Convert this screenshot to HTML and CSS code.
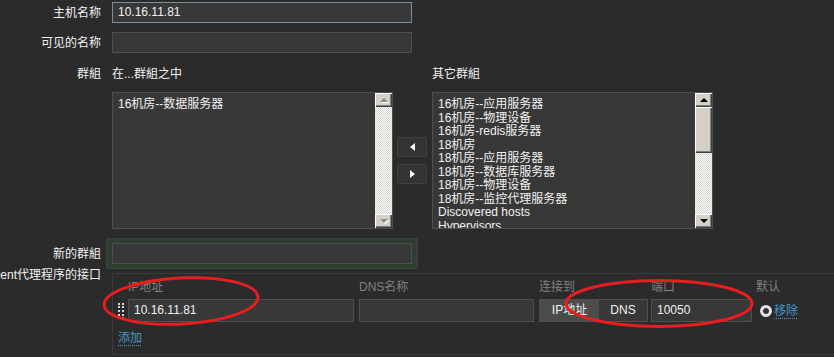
FILE: index.html
```html
<!DOCTYPE html>
<html lang="zh">
<head>
    <meta charset="UTF-8">
    <meta name="viewport" content="width=device-width, initial-scale=1.0">
    <title>主机</title>
    <link rel="stylesheet" href="styles.css">
</head>
<body>
    <div class="page">
        <div class="row row-host">
            <div class="label">主机名称</div>
            <div class="text-box focus">10.16.11.81</div>
        </div>
        <div class="row row-visible">
            <div class="label">可见的名称</div>
            <div class="text-box"></div>
        </div>
        <div class="row row-groups">
            <div class="label">群組</div>
            <div class="groups">
                <div class="group-col">
                    <div class="group-title">在...群組之中</div>
                    <div class="listbox">
                        <ul class="items">
                            <li>16机房--数据服务器</li>
                        </ul>
                        <div class="scrollbar disabled">
                            <div class="sb-btn up"><span class="tri"></span></div>
                            <div class="sb-track"></div>
                            <div class="sb-btn down"><span class="tri"></span></div>
                        </div>
                    </div>
                </div>
                <div class="move-buttons">
                    <div class="move-btn"><span class="arrow arrow-left"></span></div>
                    <div class="move-btn"><span class="arrow arrow-right"></span></div>
                </div>
                <div class="group-col">
                    <div class="group-title">其它群組</div>
                    <div class="listbox">
                        <ul class="items">
                            <li>16机房--应用服务器</li>
                            <li>16机房--物理设备</li>
                            <li>16机房-redis服务器</li>
                            <li>18机房</li>
                            <li>18机房--应用服务器</li>
                            <li>18机房--数据库服务器</li>
                            <li>18机房--物理设备</li>
                            <li>18机房--监控代理服务器</li>
                            <li>Discovered hosts</li>
                            <li>Hypervisors</li>
                        </ul>
                        <div class="scrollbar">
                            <div class="sb-btn up"><span class="tri"></span></div>
                            <div class="sb-track"><div class="sb-thumb"></div></div>
                            <div class="sb-btn down"><span class="tri"></span></div>
                        </div>
                    </div>
                </div>
            </div>
        </div>
        <div class="row row-new">
            <div class="label">新的群組</div>
            <div class="new-group">
                <div class="text-box"></div>
            </div>
        </div>
        <div class="row row-iface">
            <div class="label">Agent代理程序的接口</div>
            <div class="iface-box">
                <div class="iface-grid">
                    <div></div>
                    <div class="col-head">IP地址</div>
                    <div class="col-head">DNS名称</div>
                    <div class="col-head">连接到</div>
                    <div class="col-head">端口</div>
                    <div class="col-head">默认</div>

                    <div class="drag"></div>
                    <div class="text-box ip">10.16.11.81</div>
                    <div class="text-box dns"></div>
                    <div class="switch">
                        <span class="switch-opt active">IP地址</span>
                        <span class="switch-opt">DNS</span>
                    </div>
                    <div class="text-box port">10050</div>
                    <div class="default-cell">
                        <span class="radio"></span>
                        <a class="link">移除</a>
                    </div>

                    <div class="add-cell"><a class="link">添加</a></div>
                </div>
            </div>
        </div>

        <svg class="marks" width="834" height="357" viewBox="0 0 834 357">
            <ellipse cx="181" cy="301" rx="77" ry="23" transform="rotate(-3 181 301)" />
            <ellipse cx="659" cy="303.5" rx="93" ry="23" />
        </svg>
    </div>
</body>
</html>
```

FILE: styles.css
```css
*{
    box-sizing: border-box;
}
html, body{
    margin: 0;
    overflow: hidden;
}
body{
    background-color: #2b2b2b;
    color: #f2f2f2;
    font-family: "Liberation Sans", "Noto Sans CJK SC", sans-serif;
    font-size: 12px;
    line-height: 14px;
}
.page{
    position: relative;
    width: 834px;
    height: 357px;
    padding-top: 2px;
}
.row{
    display: flex;
    align-items: center;
}
.label{
    width: 101px;
    margin-right: 11px;
    flex-shrink: 0;
    display: flex;
    justify-content: flex-end;
    white-space: nowrap;
    line-height: 14px;
}
.text-box{
    width: 300px;
    height: 21px;
    background-color: #383838;
    border: 1px solid #4f4f4f;
    padding: 0 5px;
    line-height: 19px;
    white-space: nowrap;
}
.text-box.focus{
    border-color: #7b909c;
}
.row-visible{
    margin-top: 9px;
}

/* groups */
.row-groups{
    margin-top: 14px;
    align-items: flex-start;
}
.groups{
    display: flex;
}
.group-title{
    line-height: 14px;
    margin-bottom: 11px;
}
.listbox{
    width: 281px;
    height: 137px;
    background-color: #383838;
    border: 1px solid #4f4f4f;
    display: flex;
    overflow: hidden;
}
.items{
    list-style: none;
    margin: 0;
    padding: 5px 5px 0;
    flex: 1;
    line-height: 13.5px;
    white-space: nowrap;
    overflow: hidden;
}
.scrollbar{
    width: 17px;
    flex-shrink: 0;
    display: flex;
    flex-direction: column;
}
.sb-btn, .sb-thumb{
    background-color: #d4d0c8;
    box-shadow: inset 1px 1px #ffffff, inset -1px -1px #404040, inset -2px -2px #808080;
}
.sb-btn{
    height: 14px;
    display: flex;
    align-items: center;
    justify-content: center;
}
.sb-track{
    flex: 1;
    background: repeating-conic-gradient(#ffffff 0 25%, #d4d0c8 0 50%) 0 0 / 2px 2px;
}
.sb-thumb{
    height: 46px;
}
.tri{
    width: 0;
    height: 0;
    border-left: 4px solid transparent;
    border-right: 4px solid transparent;
}
.up .tri{
    border-bottom: 4px solid #000000;
}
.down .tri{
    border-top: 4px solid #000000;
}
.disabled .up .tri{
    border-bottom-color: #8a8a8a;
    filter: drop-shadow(1px 1px 0 #ffffff);
}
.disabled .down .tri{
    border-top-color: #8a8a8a;
    filter: drop-shadow(1px 1px 0 #ffffff);
}
.move-buttons{
    margin: 25px 5px 0 4px;
    height: 137px;
    display: flex;
    flex-direction: column;
    justify-content: center;
    gap: 7px;
}
.move-btn{
    width: 30px;
    height: 20px;
    background-color: #333333;
    border: 1px solid #424242;
    border-radius: 2px;
    display: flex;
    align-items: center;
    justify-content: center;
}
.arrow{
    width: 0;
    height: 0;
    border-top: 4px solid transparent;
    border-bottom: 4px solid transparent;
}
.arrow-left{
    border-right: 5px solid #ffffff;
}
.arrow-right{
    border-left: 5px solid #ffffff;
}

/* new group */
.row-new{
    margin-top: 9px;
}
.new-group{
    margin-left: -6px;
    padding: 4px 5px;
    background-color: #2f3d33;
    border: 1px solid #34473a;
    border-radius: 2px;
}
.new-group .text-box{
    height: 21px;
}

/* interfaces */
.row-iface{
    margin-top: 4px;
    align-items: flex-start;
}
.row-iface .label{
    margin-top: -5px;
}
.iface-box{
    width: 760px;
    flex-shrink: 0;
    border: 1px solid #3b3b3b;
    border-right: none;
    padding: 6px 0 9px 5px;
}
.iface-grid{
    display: grid;
    grid-template-columns: 10px 231px 180px 112px 105px auto;
    row-gap: 5px;
    align-items: center;
}
.col-head{
    color: #808080;
    line-height: 14px;
}
.drag{
    width: 6px;
    height: 16px;
    border-left: 2px dotted #d8d8d8;
    border-right: 2px dotted #d8d8d8;
}
.iface-grid .text-box{
    height: 23px;
    line-height: 21px;
}
.text-box.ip{
    width: 226px;
}
.text-box.dns{
    width: 175px;
}
.text-box.port{
    width: 101px;
}
.switch{
    width: 109px;
    height: 23px;
    display: flex;
    border: 1px solid #4f4f4f;
    background-color: #383838;
}
.switch-opt{
    flex: 1;
    text-align: center;
    line-height: 21px;
}
.switch-opt.active{
    flex: 0 0 59px;
    background-color: #4b4d4b;
}
.default-cell{
    display: flex;
    align-items: center;
}
.radio{
    width: 12px;
    height: 12px;
    margin: 0 2px 0 4px;
    border-radius: 50%;
    background-color: #f2f2f2;
    border: 3px solid #e6e6e6;
    box-shadow: inset 0 0 0 1px #333333, inset 0 0 0 3px #333333;
}
.link{
    color: #4796c4;
    text-decoration: underline dotted;
    text-underline-offset: 3px;
    cursor: pointer;
}
.add-cell{
    grid-column: 1 / -1;
    margin-top: 4px;
}
.marks{
    position: absolute;
    top: 0;
    left: 0;
    pointer-events: none;
}
.marks ellipse{
    fill: none;
    stroke: #e81d1d;
    stroke-width: 3;
}
```
